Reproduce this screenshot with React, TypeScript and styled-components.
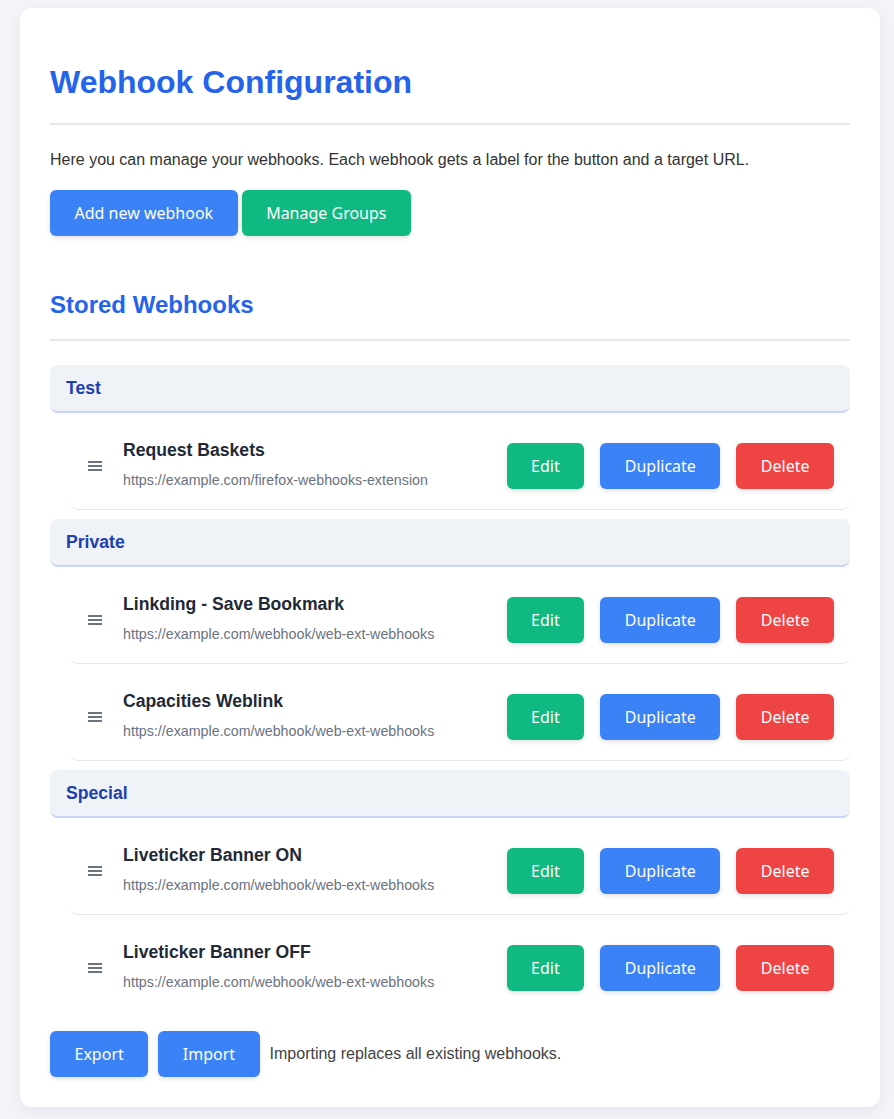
import styled, { createGlobalStyle } from "styled-components";

const GlobalStyle = createGlobalStyle`
  html, body {
    margin: 0;
    padding: 0;
    background-color: #f3f4f8;
    font-family: "Liberation Sans", Arial, sans-serif;
  }
`;

const Page = styled.div`
  padding: 8px 14px 12px 20px;
`;

const Card = styled.div`
  background-color: #ffffff;
  border-radius: 12px;
  padding: 30px 30px 30px;
  box-shadow: 0 4px 16px rgba(17, 24, 39, 0.06);
`;

const Title = styled.h1`
  margin: 26px 0 0;
  padding-bottom: 22px;
  border-bottom: 2px solid #e5e7eb;
  color: #2563eb;
  font-size: 32px;
  font-weight: 700;
  line-height: 37px;
`;

const Intro = styled.p`
  margin: 25px 0 0;
  color: #333333;
  font-size: 16px;
  line-height: 19px;
`;

const ButtonRow = styled.div<{ $gap: number; $top?: number }>`
  display: flex;
  align-items: center;
  gap: ${(p) => p.$gap}px;
  margin-top: ${(p) => p.$top ?? 0}px;
`;

const colors = {
  blue: "#3b82f6",
  green: "#10b981",
  red: "#ef4444",
};

const Button = styled.button<{ $color: keyof typeof colors }>`
  font-family: "Noto Sans", "Open Sans", sans-serif;
  font-size: 16px;
  line-height: 22px;
  padding: 12px 24.5px;
  border: none;
  border-radius: 6px;
  color: #ffffff;
  background-color: ${(p) => colors[p.$color]};
  box-shadow: 0 2px 5px rgba(0, 0, 0, 0.12);
  cursor: pointer;
  white-space: nowrap;
`;

const SectionTitle = styled.h2`
  margin: 55px 0 0;
  padding-bottom: 20px;
  border-bottom: 2px solid #e5e7eb;
  color: #2563eb;
  font-size: 24px;
  font-weight: 700;
  line-height: 28px;
`;

const Groups = styled.div`
  margin-top: 24px;
  display: flex;
  flex-direction: column;
  gap: 9px;
`;

const GroupHeader = styled.div`
  background-color: #eff2f7;
  border-radius: 8px;
  border-bottom: 2px solid #c7d2fe;
  padding: 13px 16px;
  color: #1e40af;
  font-size: 17.6px;
  font-weight: 700;
  line-height: 20px;
`;

const Item = styled.div<{ $last?: boolean }>`
  margin-left: 20px;
  display: flex;
  align-items: center;
  padding: 30px 16px 20px 18px;
  border-bottom: 1px solid ${(p) => (p.$last ? "transparent" : "#e5e7eb")};
  border-radius: 8px;
`;

const Handle = styled.div`
  width: 14px;
  margin-right: 21px;
  display: flex;
  align-items: center;
  color: #6b7280;
`;

const ItemText = styled.div`
  flex: 1;
  display: flex;
  flex-direction: column;
  gap: 11px;
  margin-top: -4px;
`;

const ItemName = styled.div`
  color: #1f2937;
  font-size: 17.6px;
  font-weight: 700;
  line-height: 21px;
`;

const ItemUrl = styled.div`
  color: #6b7280;
  font-size: 14.25px;
  line-height: 17px;
`;

const Footer = styled.div`
  margin-top: 19px;
  display: flex;
  align-items: center;
  gap: 10px;
`;

const Note = styled.span`
  color: #444444;
  font-size: 16px;
`;

const groups = [
  {
    name: "Test",
    items: [
      {
        name: "Request Baskets",
        url: "https://example.com/firefox-webhooks-extension",
      },
    ],
  },
  {
    name: "Private",
    items: [
      {
        name: "Linkding - Save Bookmark",
        url: "https://example.com/webhook/web-ext-webhooks",
      },
      {
        name: "Capacities Weblink",
        url: "https://example.com/webhook/web-ext-webhooks",
      },
    ],
  },
  {
    name: "Special",
    items: [
      {
        name: "Liveticker Banner ON",
        url: "https://example.com/webhook/web-ext-webhooks",
      },
      {
        name: "Liveticker Banner OFF",
        url: "https://example.com/webhook/web-ext-webhooks",
      },
    ],
  },
];

function DragIcon() {
  return (
    <svg width="14" height="12" viewBox="0 0 14 12">
      <rect x="0" y="1" width="14" height="2" fill="currentColor" />
      <rect x="0" y="5" width="14" height="2" fill="currentColor" />
      <rect x="0" y="9" width="14" height="2" fill="currentColor" />
    </svg>
  );
}

function App() {
  return (
    <>
      <GlobalStyle />
      <Page>
        <Card>
          <Title>Webhook Configuration</Title>
          <Intro>
            Here you can manage your webhooks. Each webhook gets a label for the
            button and a target URL.
          </Intro>
          <ButtonRow $gap={4} $top={21}>
            <Button $color="blue">Add new webhook</Button>
            <Button $color="green">Manage Groups</Button>
          </ButtonRow>

          <SectionTitle>Stored Webhooks</SectionTitle>
          <Groups>
            {groups.map((group, gi) => (
              <div key={group.name}>
                <GroupHeader>{group.name}</GroupHeader>
                {group.items.map((item, ii) => (
                  <Item
                    key={item.name}
                    $last={
                      gi === groups.length - 1 && ii === group.items.length - 1
                    }
                  >
                    <Handle>
                      <DragIcon />
                    </Handle>
                    <ItemText>
                      <ItemName>{item.name}</ItemName>
                      <ItemUrl>{item.url}</ItemUrl>
                    </ItemText>
                    <ButtonRow $gap={16}>
                      <Button $color="green">Edit</Button>
                      <Button $color="blue">Duplicate</Button>
                      <Button $color="red">Delete</Button>
                    </ButtonRow>
                  </Item>
                ))}
              </div>
            ))}
          </Groups>

          <Footer>
            <Button $color="blue">Export</Button>
            <Button $color="blue">Import</Button>
            <Note>Importing replaces all existing webhooks.</Note>
          </Footer>
        </Card>
      </Page>
    </>
  );
}

export default App;
